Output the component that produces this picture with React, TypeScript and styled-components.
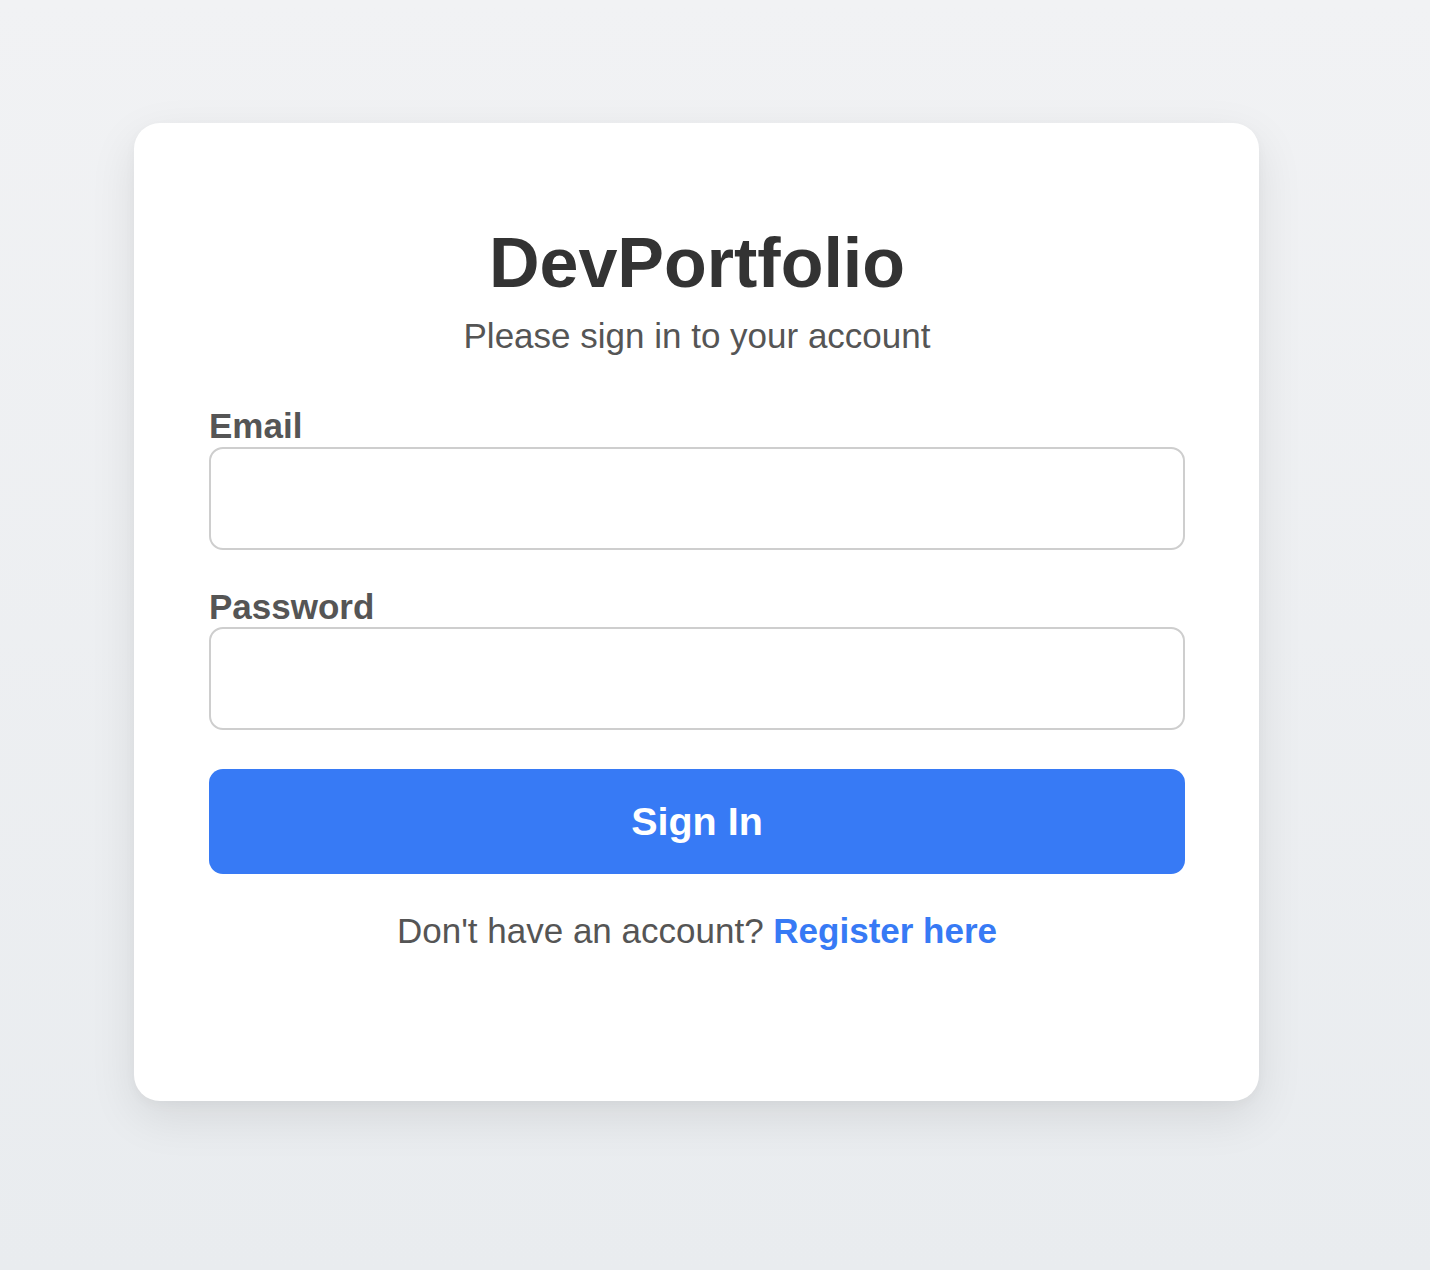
import React from "react";
import styled, { createGlobalStyle } from "styled-components";

const GlobalStyle = createGlobalStyle`
  html, body {
    margin: 0;
    padding: 0;
  }
  body {
    min-height: 1270px;
    background: linear-gradient(180deg, #f1f2f4 0%, #e9ecef 100%);
    font-family: "Liberation Sans", Arial, Helvetica, sans-serif;
  }
  * { box-sizing: border-box; }
`;

const Page = styled.main`
  min-height: 1270px;
  padding: 123px 0 0 134px;
  display: flex;
  align-items: flex-start;
`;

const Card = styled.section`
  width: 1125px;
  background: #ffffff;
  border-radius: 26px;
  box-shadow: 0 16px 48px rgba(0, 0, 0, 0.09), 0 4px 12px rgba(0, 0, 0, 0.03);
  padding: 105px 74px 153px 75px;
  display: flex;
  flex-direction: column;
`;

const Header = styled.header`
  display: flex;
  flex-direction: column;
  align-items: center;
  gap: 20px;
  margin-bottom: 55px;
`;

const Title = styled.h1`
  margin: 0;
  font-size: 70px;
  line-height: 1;
  font-weight: 700;
  color: #333333;
`;

const Subtitle = styled.p`
  margin: 0;
  font-size: 35px;
  line-height: 1;
  color: #555555;
`;

const Form = styled.form`
  display: flex;
  flex-direction: column;
  gap: 39px;
`;

const Field = styled.div`
  display: flex;
  flex-direction: column;
  gap: 3.5px;
`;

const Label = styled.label`
  font-size: 35px;
  line-height: 1;
  font-weight: 700;
  color: #555555;
`;

const Input = styled.input`
  width: 100%;
  height: 103px;
  border: 2px solid #cecece;
  border-radius: 14px;
  background: #ffffff;
  padding: 0 24px;
  font-family: inherit;
  font-size: 30px;
  color: #333;
  outline: none;
`;

const Button = styled.button`
  width: 100%;
  height: 105px;
  border: none;
  border-radius: 14px;
  background: #377af5;
  color: #ffffff;
  font-family: inherit;
  font-size: 39.5px;
  font-weight: 700;
  cursor: pointer;
`;

const Footer = styled.p`
  margin: 39px 0 0;
  text-align: center;
  font-size: 35px;
  line-height: 1;
  color: #555555;
`;

const Link = styled.a`
  color: #377af5;
  font-weight: 700;
  text-decoration: none;
`;

export default function App() {
  return (
    <>
      <GlobalStyle />
      <Page>
        <Card>
          <Header>
            <Title>DevPortfolio</Title>
            <Subtitle>Please sign in to your account</Subtitle>
          </Header>
          <Form onSubmit={(e) => e.preventDefault()}>
            <Field>
              <Label htmlFor="email">Email</Label>
              <Input id="email" type="email" />
            </Field>
            <Field>
              <Label htmlFor="password">Password</Label>
              <Input id="password" type="password" />
            </Field>
            <Button type="submit">Sign In</Button>
          </Form>
          <Footer>
            Don't have an account? <Link href="#">Register here</Link>
          </Footer>
        </Card>
      </Page>
    </>
  );
}
